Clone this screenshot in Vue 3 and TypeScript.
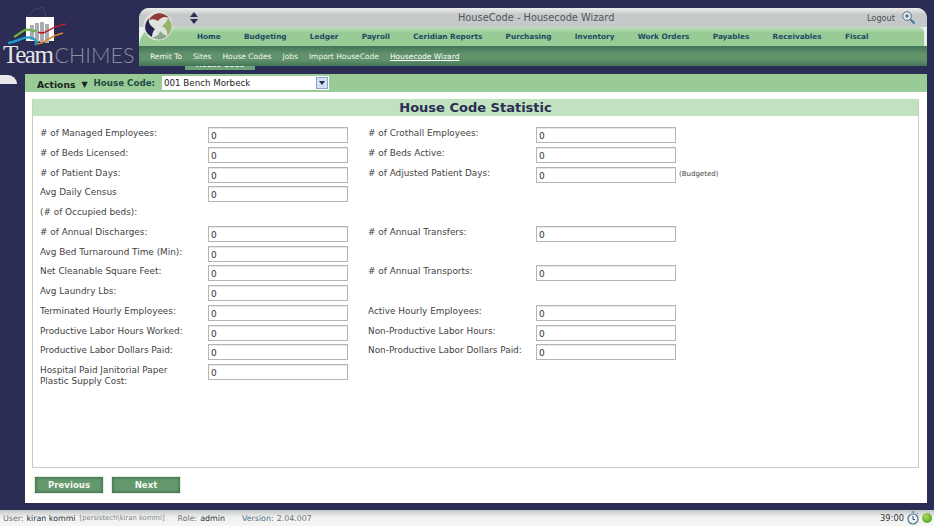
<template>
  <div class="page">
    <div class="top">
      <div class="brand">
        <svg class="brand-mark" width="139" height="46" viewBox="0 0 139 46">
          <path d="M27 17 L35 9 L43 7 L46 17" fill="none" stroke="#4a4c6c" stroke-width="0.7" />
          <rect x="26" y="17" width="28" height="24" fill="#fff" />
          <g fill="#a9adb2">
            <rect x="30" y="25" width="4" height="15" />
            <rect x="35" y="23" width="4" height="19" />
            <rect x="40" y="22" width="4" height="20" />
            <rect x="45" y="24" width="4" height="19" />
          </g>
          <path d="M14 37 C22 33 24 28 30 30 C35 31 32 33 36 30" fill="none" stroke="#6cb33f" stroke-width="2.2" />
          <path d="M8 43 C18 42 24 35 32 38 C37 40 37 42 35 45" fill="none" stroke="#1b9ed0" stroke-width="2.4" />
          <path d="M38 32 C46 36 50 26 66 24" fill="none" stroke="#b5202e" stroke-width="1.6" />
          <path d="M37 44 C47 43 48 36 63 33" fill="none" stroke="#e5822a" stroke-width="1.6" />
        </svg>
        <div class="brand-name"><span class="team">Team</span><span class="chimes">CHIMES</span></div>
      </div>
      <div class="header-wrap">
        <header class="app-header">
          <svg class="swirl" width="30" height="30" viewBox="0 0 30 30">
            <circle cx="15" cy="15" r="14.5" fill="#dfe3df" />
            <path d="M6 9 C10 1 20 0 26 7 C22 5 18 6 15 10 C12 8 9 8 6 9 Z" fill="#8f3a35" />
            <path d="M25 7 C31 13 29 21 24 25 C25 21 23 17 19 15 C22 13 24 10 25 7 Z" fill="#9ab36a" />
            <path d="M24 25 C19 30 13 29 9 26 C13 26 16 24 17 20 C19 22 21 24 24 25 Z" fill="#8aa88f" />
            <path d="M9 26 C1 22 0 14 6 7 C5 11 7 15 12 18 C10 20 9 23 9 26 Z" fill="#23264f" />
          </svg>
          <div class="title-bar">
            <svg class="updown" width="8" height="12" viewBox="0 0 8 12">
              <path d="M4 0 L8 5 H0 Z M4 12 L0 7 H8 Z" fill="#2b2d54" />
            </svg>
            <span class="page-title">HouseCode - Housecode Wizard</span>
            <span class="logout">Logout</span>
            <svg class="zoom-icon" width="13" height="13" viewBox="0 0 13 13">
              <circle cx="5" cy="5" r="4.3" fill="#e8eef2" stroke="#52707f" stroke-width="1" />
              <path d="M3 5 H7 M5 3 V7" stroke="#2f4f5f" stroke-width="1" />
              <path d="M8.5 8.5 L12.5 12.5" stroke="#44779a" stroke-width="2" />
            </svg>
          </div>
          <nav class="main-nav">
            <a v-for="item in mainNav" :key="item">{{ item }}</a>
          </nav>
          <nav class="sub-nav">
            <a v-for="item in subNav" :key="item" :class="{ current: item === 'Housecode Wizard' }">{{ item }}</a>
          </nav>
        </header>
        <div class="tabs">
          <span class="tab active">House Code</span>
          <span class="tab">Reports</span>
          <span class="tab">Setup</span>
          <span class="tab">Information</span>
        </div>
      </div>
    </div>

    <div class="middle">
      <aside class="rail"><span class="rail-handle"></span></aside>
      <main class="panel">
        <div class="actions-bar">
          <span class="actions">Actions</span>
          <span class="caret">▼</span>
          <label class="hc-label">House Code:</label>
          <div class="hc-select">
            <span>001 Bench Morbeck</span>
            <span class="hc-arrow"><i></i></span>
          </div>
        </div>
        <div class="content">
          <section class="stat-box">
            <h1>House Code Statistic</h1>
            <div class="form">
              <div v-for="(row, i) in rows" :key="i" class="row">
                <label class="lbl">{{ row.left }}</label>
                <input v-if="row.hasInput !== false" class="field" value="0" />
                <span v-else></span>
                <template v-if="row.right">
                  <label class="lbl second">{{ row.right }}</label>
                  <input class="field" value="0" />
                  <span v-if="row.note" class="note">{{ row.note }}</span>
                </template>
              </div>
            </div>
          </section>
          <div class="buttons">
            <button class="btn" type="button">Previous</button>
            <button class="btn" type="button">Next</button>
          </div>
        </div>
      </main>
    </div>

    <footer class="status">
      <span class="muted">User:</span>
      <span class="val user">kiran kommi</span>
      <span class="acct">[persistech\kiran kommi]</span>
      <span class="muted role">Role:</span>
      <span class="val">admin</span>
      <span class="ver">Version:</span>
      <span class="muted">2.04.007</span>
      <span class="spacer"></span>
      <span class="timer">39:00</span>
      <svg class="clock" width="12" height="14" viewBox="0 0 12 14">
        <circle cx="6" cy="8" r="5" fill="#eef3f8" stroke="#4d6f8c" stroke-width="1.2" />
        <path d="M6 5 V8.5 H8" fill="none" stroke="#2f4f6c" stroke-width="1" />
        <path d="M4.5 1 H7.5 M10 2 L11 3" stroke="#4d6f8c" stroke-width="1" />
      </svg>
      <span class="led"></span>
    </footer>
  </div>
</template>

<script setup lang="ts">
interface StatRow {
  left: string;
  right?: string;
  note?: string;
  hasInput?: boolean;
}

const mainNav: string[] = [
  "Home",
  "Budgeting",
  "Ledger",
  "Payroll",
  "Ceridian Reports",
  "Purchasing",
  "Inventory",
  "Work Orders",
  "Payables",
  "Receivables",
  "Fiscal",
];

const subNav: string[] = ["Remit To", "Sites", "House Codes", "Jobs", "Import HouseCode", "Housecode Wizard"];

const rows: StatRow[] = [
  { left: "# of Managed Employees:", right: "# of Crothall Employees:" },
  { left: "# of Beds Licensed:", right: "# of Beds Active:" },
  { left: "# of Patient Days:", right: "# of Adjusted Patient Days:", note: "(Budgeted)" },
  { left: "Avg Daily Census" },
  { left: "(# of Occupied beds):", hasInput: false },
  { left: "# of Annual Discharges:", right: "# of Annual Transfers:" },
  { left: "Avg Bed Turnaround Time (Min):" },
  { left: "Net Cleanable Square Feet:", right: "# of Annual Transports:" },
  { left: "Avg Laundry Lbs:" },
  { left: "Terminated Hourly Employees:", right: "Active Hourly Employees:" },
  { left: "Productive Labor Hours Worked:", right: "Non-Productive Labor Hours:" },
  { left: "Productive Labor Dollars Paid:", right: "Non-Productive Labor Dollars Paid:" },
  { left: "Hospital Paid Janitorial Paper Plastic Supply Cost:" },
];
</script>

<style>
html,
body {
  margin: 0;
  background: #2b2d54;
}
</style>

<style scoped>
.page {
  width: 934px;
  height: 526px;
  display: flex;
  flex-direction: column;
  overflow: hidden;
  background: #2b2d54;
  font-family: "DejaVu Sans", Verdana, sans-serif;
  color: #3a3a3a;
}

/* top */
.top {
  display: flex;
  height: 74px;
  flex: none;
}
.brand {
  width: 139px;
  flex: none;
}
.brand-mark {
  display: block;
}
.brand-name {
  margin-top: -4px;
  padding-left: 3px;
  line-height: 26px;
  white-space: nowrap;
}
.team {
  font-family: "Liberation Serif", serif;
  font-size: 25px;
  letter-spacing: -1.4px;
  color: #e6e6e6;
}
.chimes {
  margin-left: 2px;
  font-family: Lato, sans-serif;
  font-weight: 300;
  font-size: 21.5px;
  color: #8c8e9e;
}
.header-wrap {
  width: 788px;
  flex: none;
  padding-top: 8px;
}
.app-header {
  position: relative;
  z-index: 1;
  height: 58px;
  border-radius: 10px 10px 0 0;
  background: #e9f2e7;
  overflow: hidden;
}
.swirl {
  position: absolute;
  left: 4px;
  top: 3px;
  z-index: 1;
}
.title-bar {
  height: 19px;
  display: flex;
  align-items: center;
  padding: 0 12px 0 51px;
  background: linear-gradient(#eceded, #c6c9ca 35%, #c6c9ca);
  color: #4a4f55;
}
.page-title {
  position: absolute;
  left: 319px;
  font-size: 9.8px;
  color: #50565c;
}
.logout {
  margin-left: auto;
  font-size: 8.2px;
}
.zoom-icon {
  margin-left: 7px;
}
.main-nav {
  height: 19px;
  display: flex;
  align-items: center;
  gap: 23.3px;
  padding-left: 58px;
  background: linear-gradient(#c2e0bf, #98cb96 30%);
  border-radius: 22px 6px 0 0;
  margin-right: 3px;
  font-size: 7.3px;
  font-weight: bold;
  color: #1d4b63;
  white-space: nowrap;
}
.sub-nav {
  height: 20px;
  display: flex;
  align-items: center;
  gap: 11px;
  padding-left: 11px;
  background: linear-gradient(#43745a, #60936a 40%, #5f9269 70%, #44745a);
  font-size: 7.5px;
  color: #f1f6ee;
  white-space: nowrap;
}
.sub-nav .current {
  text-decoration: underline;
  color: #fff;
}
/* sits under the header, only the bottom edge of the labels shows */
.tabs {
  position: relative;
  height: 10px;
  margin-top: -6px;
  overflow: hidden;
  display: flex;
  padding-left: 46px;
  font-size: 7.3px;
  font-weight: bold;
  line-height: 9px;
  color: #1d3b63;
}
.tab {
  padding: 0 11px;
}
.tab.active {
  width: 70px;
  box-sizing: border-box;
  padding: 0;
  text-align: center;
  background: #6ba27a;
  color: #e9f3e6;
}

/* middle */
.middle {
  display: flex;
  height: 429px;
  flex: none;
}
.rail {
  width: 25px;
  flex: none;
}
.rail-handle {
  display: block;
  width: 17px;
  height: 9px;
  margin-top: 1px;
  background: #e8e8ea;
  border-radius: 0 9px 0 0;
}
.panel {
  width: 902px;
  flex: none;
  display: flex;
  flex-direction: column;
  background: #fff;
}
.actions-bar {
  height: 18px;
  flex: none;
  display: flex;
  align-items: center;
  padding-left: 12px;
  background: #98cb96;
  font-size: 8.7px;
  font-weight: bold;
}
.actions {
  color: #1c2320;
  font-size: 9.2px;
  padding-top: 3px;
}
.caret {
  margin-left: 6px;
  font-size: 8px;
  color: #1c2320;
  padding-top: 3px;
}
.hc-label {
  margin-left: 6px;
  color: #1f4a44;
}
.hc-select {
  margin-left: 7px;
  width: 167px;
  height: 14px;
  box-sizing: border-box;
  display: flex;
  align-items: center;
  justify-content: space-between;
  background: #fff;
  padding-left: 2px;
  font-size: 8.7px;
  font-weight: normal;
  color: #222;
}
.hc-arrow {
  width: 12px;
  height: 12px;
  margin-right: 1px;
  display: flex;
  align-items: center;
  justify-content: center;
  background: #d3dff2;
  border: 1px solid #8ea6cc;
  box-sizing: border-box;
}
.hc-arrow i {
  width: 0;
  height: 0;
  border-left: 3px solid transparent;
  border-right: 3px solid transparent;
  border-top: 4px solid #1b2a52;
}
.content {
  flex: 1;
  padding: 7px 8px 0 7px;
}
.stat-box {
  height: 369px;
  box-sizing: border-box;
  border: 1px solid #c9cbc9;
  border-top: 0;
}
.stat-box h1 {
  margin: 0;
  height: 17px;
  line-height: 18px;
  background: #c1e2bf;
  text-align: center;
  font-size: 13px;
  font-weight: bold;
  color: #2b2d54;
}
.form {
  padding: 11px 0 0 7px;
}
.row {
  height: 19.75px;
  display: grid;
  grid-template-columns: 168px 140px 188px 140px auto;
  align-items: start;
}
.lbl {
  margin-top: 1px;
  font-size: 8.9px;
  line-height: 11px;
  color: #3f3f3f;
  width: 145px;
}
.second {
  margin-left: 20px;
  width: 168px;
  white-space: nowrap;
}
.field {
  width: 140px;
  height: 16px;
  box-sizing: border-box;
  padding: 2px 2px 0;
  border: 1px solid #b5b5b5;
  box-shadow: inset 0 1px 0 #e8e8e8;
  background: #fff;
  font-family: inherit;
  font-size: 9px;
  color: #333;
  outline: none;
}
.note {
  margin-left: 3px;
  padding-top: 3px;
  font-size: 7px;
  color: #444;
}
.buttons {
  display: flex;
  gap: 9px;
  padding: 9px 0 0 3px;
}
.btn {
  width: 68px;
  height: 16px;
  padding: 0;
  border: 0;
  background: #64986d;
  box-shadow: inset 0 0 3px 1px #41714f, 0 0 0 1px #e3ebe2;
  font-family: inherit;
  font-size: 8.6px;
  font-weight: bold;
  color: #f2f7ee;
}

/* footer */
.status {
  margin-top: 7px;
  height: 16px;
  flex: none;
  display: flex;
  align-items: center;
  padding: 0 2px 0 3px;
  background: linear-gradient(#c3c7c7, #f1f2f0 45%, #f5f5f3);
  font-size: 7.9px;
  white-space: nowrap;
}
.muted {
  color: #6b6f73;
}
.val {
  color: #26323a;
}
.user {
  margin-left: 3px;
}
.acct {
  margin-left: 4px;
  font-size: 6.8px;
  color: #7d8285;
}
.role {
  margin-left: 13px;
}
.role + .val {
  margin-left: 3px;
}
.ver {
  margin-left: 17px;
  margin-right: 3px;
  color: #4b6a8c;
}
.spacer {
  flex: 1;
}
.timer {
  color: #333;
  font-size: 8.3px;
}
.clock {
  margin-left: 3px;
}
.led {
  width: 10px;
  height: 10px;
  margin-left: 3px;
  border-radius: 50%;
  background: radial-gradient(circle at 40% 35%, #a6dc62, #5ea82c 70%);
}
</style>
